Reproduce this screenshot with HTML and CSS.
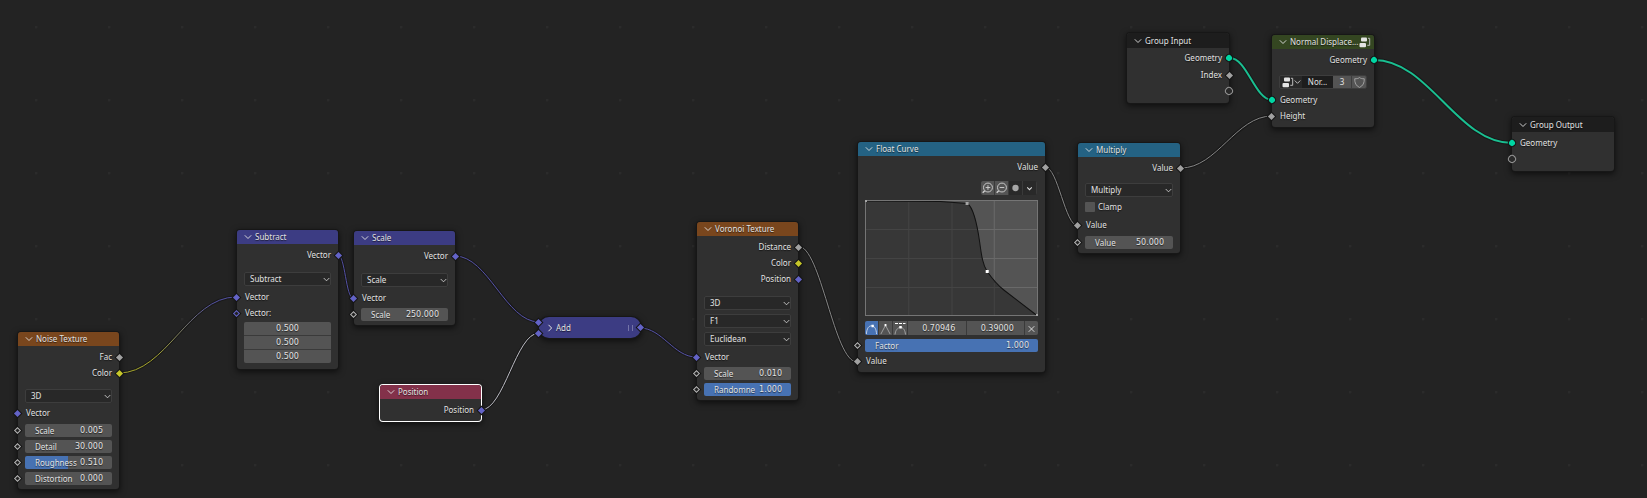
FILE: index.html
```html
<!DOCTYPE html>
<html lang="en">
<head>
<meta charset="utf-8">
<title>Geometry Nodes</title>
<link rel="stylesheet" href="styles.css">
</head>
<body>
<svg class="defs" width="0" height="0" aria-hidden="true">
  <symbol id="down" viewBox="0 0 8 8"><path d="M0.8 2.3 L4 5.5 L7.2 2.3" fill="none" stroke="currentColor" stroke-width="0.9"/></symbol>
  <symbol id="right" viewBox="0 0 8 8"><path d="M2.5 0.8 L5.6 4 L2.5 7.2" fill="none" stroke="currentColor" stroke-width="1"/></symbol>
  <symbol id="tree" viewBox="0 0 12 11"><g fill="#e4e4e4"><rect x="2" y="0.5" width="6" height="4" rx="1"/><rect x="0.5" y="6" width="6.5" height="4.2" rx="1"/></g><path d="M9 1.3 H10.7 V8.3 H8.3" fill="none" stroke="#bcbcbc"/></symbol>
</svg>
<main class="canvas">
  <svg class="links" aria-hidden="true">
    <defs>
      <linearGradient id="mix" x1="0" x2="1" y1="0" y2="0"><stop offset="0.3" stop-color="#a5a52c"/><stop offset="0.55" stop-color="#77776a"/><stop offset="0.8" stop-color="#5452a4"/></linearGradient>
    </defs>
    <path class="shade" d="M119 373C166 373 189 297 236 297M338 255C345 255 346 298 353 298M455 256C488 256 506 322 539 322M481 410C504 410 516 333 539 333M640 328C662 328 674 357 696 357M798 246C821 246 834 362 857 362M1045 167C1058 167 1065 226 1078 226M1181 168C1217 168 1236 116 1272 116"/>
    <path stroke="url(#mix)" d="M119 373C166 373 189 297 236 297"/>
    <path class="vector" d="M338 255C345 255 346 298 353 298M455 256C488 256 506 322 539 322M640 328C662 328 674 357 696 357"/>
    <path class="selected" d="M481 410C504 410 516 333 539 333"/>
    <path class="value" d="M798 246C821 246 834 362 857 362M1045 167C1058 167 1065 226 1078 226M1181 168C1217 168 1236 116 1272 116"/>
    <path class="geo-shade" d="M1230 58C1247 58 1255 100 1272 100M1374 60C1429 60 1457 143 1512 143"/>
    <path class="geo" d="M1230 58C1247 58 1255 100 1272 100M1374 60C1429 60 1457 143 1512 143"/>
  </svg>

  <section class="node texture noise">
    <header><button aria-label="Collapse"><svg><use href="#down"/></svg></button><h2>Noise Texture</h2></header>
    <div class="body">
      <div class="row out">Fac<i class="socket grey"></i></div>
      <div class="row out">Color<i class="socket yellow"></i></div>
      <div class="menu"><select aria-label="Dimensions"><option>3D</option></select><svg><use href="#down"/></svg></div>
      <div class="row in gap">Vector<i class="socket purple"></i></div>
      <div class="row"><i class="socket ring"></i><label class="field"><span>Scale</span><input value="0.005"></label></div>
      <div class="row"><i class="socket ring"></i><label class="field"><span>Detail</span><input value="30.000"></label></div>
      <div class="row"><i class="socket ring"></i><label class="field slider" style="--fill:49%"><span>Roughness</span><input value="0.510"></label></div>
      <div class="row"><i class="socket ring"></i><label class="field"><span>Distortion</span><input value="0.000"></label></div>
    </div>
  </section>

  <section class="node math subtract">
    <header><button aria-label="Collapse"><svg><use href="#down"/></svg></button><h2>Subtract</h2></header>
    <div class="body">
      <div class="row out">Vector<i class="socket purple"></i></div>
      <div class="menu"><select aria-label="Operation"><option>Subtract</option></select><svg><use href="#down"/></svg></div>
      <div class="row in">Vector<i class="socket purple"></i></div>
      <div class="row in gap">Vector:<i class="socket ring purple-ring"></i></div>
      <div class="xyz"><input aria-label="X" value="0.500"><input aria-label="Y" value="0.500"><input aria-label="Z" value="0.500"></div>
    </div>
  </section>

  <section class="node math scale">
    <header><button aria-label="Collapse"><svg><use href="#down"/></svg></button><h2>Scale</h2></header>
    <div class="body">
      <div class="row out">Vector<i class="socket purple"></i></div>
      <div class="menu"><select aria-label="Operation"><option>Scale</option></select><svg><use href="#down"/></svg></div>
      <div class="row in">Vector<i class="socket purple"></i></div>
      <div class="row"><i class="socket ring"></i><label class="field"><span>Scale</span><input value="250.000"></label></div>
    </div>
  </section>

  <section class="node input position">
    <header><button aria-label="Collapse"><svg><use href="#down"/></svg></button><h2>Position</h2></header>
    <div class="body">
      <div class="row out">Position<i class="socket purple"></i></div>
    </div>
  </section>

  <section class="node collapsed add">
    <button aria-label="Expand"><svg><use href="#right"/></svg></button><h2>Add</h2><span class="grip"></span>
    <i class="socket purple first"></i><i class="socket purple second"></i><i class="socket purple last"></i>
  </section>

  <section class="node texture voronoi">
    <header><button aria-label="Collapse"><svg><use href="#down"/></svg></button><h2>Voronoi Texture</h2></header>
    <div class="body">
      <div class="row out">Distance<i class="socket grey"></i></div>
      <div class="row out">Color<i class="socket yellow"></i></div>
      <div class="row out">Position<i class="socket purple"></i></div>
      <div class="stack">
        <div class="menu"><select aria-label="Dimensions"><option>3D</option></select><svg><use href="#down"/></svg></div>
        <div class="menu"><select aria-label="Feature"><option>F1</option></select><svg><use href="#down"/></svg></div>
        <div class="menu"><select aria-label="Distance metric"><option>Euclidean</option></select><svg><use href="#down"/></svg></div>
      </div>
      <div class="row in">Vector<i class="socket purple"></i></div>
      <div class="row"><i class="socket ring"></i><label class="field"><span>Scale</span><input value="0.010"></label></div>
      <div class="row"><i class="socket ring"></i><label class="field slider" style="--fill:100%"><span>Randomne</span><input value="1.000"></label></div>
    </div>
  </section>

  <section class="node converter curve">
    <header><button aria-label="Collapse"><svg><use href="#down"/></svg></button><h2>Float Curve</h2></header>
    <div class="body">
      <div class="row out">Value<i class="socket grey"></i></div>
      <div class="tools">
        <button class="lit" aria-label="Zoom in"><svg viewBox="0 0 14 14"><g fill="none" stroke="#d0d0d0"><circle cx="7.5" cy="6.5" r="4.8"/><path d="M4 10 L1.8 12.2" stroke-width="1.5"/><path d="M5 6.5 H10 M7.5 4 V9"/></g></svg></button>
        <button class="lit" aria-label="Zoom out"><svg viewBox="0 0 14 14"><g fill="none" stroke="#d0d0d0"><circle cx="7.5" cy="6.5" r="4.8"/><path d="M4 10 L1.8 12.2" stroke-width="1.5"/><path d="M5 6.5 H10"/></g></svg></button>
        <button aria-label="Clipping"><svg viewBox="0 0 14 14"><circle cx="7" cy="7" r="3.4" fill="#a6a6a6"/></svg></button>
        <button aria-label="Curve tools"><svg viewBox="0 0 14 14"><path d="M4.5 6.3 L7 8.8 L9.5 6.3" fill="none" stroke="#ddd" stroke-width="1.1"/></svg></button>
      </div>
      <svg class="plot" viewBox="0 0 172 116" preserveAspectRatio="none">
        <rect width="172" height="116" fill="#545454"/>
        <path d="M128.5 0 V116 M0 29.5 H172 M0 58.5 H172 M0 87.5 H172" stroke="#696969" fill="none"/>
        <path d="M0.5 1 L75 1.5 L102 3.5 C109 9 112 28 114 42 C116 57 117 64 121.5 71.5 C126 78 133 86 138 90 L171 115.5 H0Z" fill="#373737"/>
        <path d="M43.5 1 V116 M86.5 2 V116 M128.5 83 V116 M0 29.5 H112 M0 58.5 H117 M0 87.5 H135" stroke="#444" fill="none"/>
        <path d="M0.5 1 L75 1.5 L102 3.5 C109 9 112 28 114 42 C116 57 117 64 121.5 71.5 C126 78 133 86 138 90 L171 115.5" fill="none" stroke="#121212"/>
        <rect x="0.5" y="0.5" width="171" height="115" fill="none" stroke="#757575"/>
        <path d="M0 0H2V2H0ZM100 2H103V5H100ZM170 114H172V116H170Z" fill="#a5a5a5"/>
        <rect x="120" y="70" width="3" height="3" fill="#fff"/>
      </svg>
      <div class="points">
        <button class="active" aria-label="Auto handle"><svg viewBox="0 0 14 14"><path d="M1.5 12.5 C2 6 4 3.5 7.5 3.5 C10.5 4 12 7 12.5 12.5" fill="none" stroke="#ccd7e8"/><path d="M7 2.5h2.5v2.5h-2.5z" fill="#fff"/></svg></button>
        <button aria-label="Vector handle"><svg viewBox="0 0 14 14"><path d="M2 12.5 L7 3 L12 12.5" fill="none" stroke="#a5a5a5"/><path d="M6 1.5h2v2.5h-2z" fill="#fff"/></svg></button>
        <button aria-label="Clamped handle"><svg viewBox="0 0 14 14"><path d="M2 12.5 C2.5 8 4.5 6 7.5 5 C10.5 6 12 8 12.5 12.5" fill="none" stroke="#a5a5a5"/><path d="M2 1.5 H12.5" stroke="#fff" stroke-dasharray="3 1"/><path d="M6.3 4h2.5v2.5h-2.5z" fill="#fff"/></svg></button>
        <input aria-label="Point X" value="0.70946"><input aria-label="Point Y" value="0.39000">
        <button aria-label="Delete point"><svg viewBox="0 0 14 14"><path d="M4 4 L10 10 M10 4 L4 10" stroke="#e0e0e0"/></svg></button>
      </div>
      <div class="row"><i class="socket ring"></i><label class="field slider" style="--fill:100%"><span>Factor</span><input value="1.000"></label></div>
      <div class="row in">Value<i class="socket grey"></i></div>
    </div>
  </section>

  <section class="node converter multiply">
    <header><button aria-label="Collapse"><svg><use href="#down"/></svg></button><h2>Multiply</h2></header>
    <div class="body">
      <div class="row out">Value<i class="socket grey"></i></div>
      <div class="menu"><select aria-label="Operation"><option>Multiply</option></select><svg><use href="#down"/></svg></div>
      <label class="row check"><input type="checkbox">Clamp</label>
      <div class="row in gap">Value<i class="socket grey"></i></div>
      <div class="row"><i class="socket ring"></i><label class="field"><span>Value</span><input value="50.000"></label></div>
    </div>
  </section>

  <section class="node group-io group-input">
    <header><button aria-label="Collapse"><svg><use href="#down"/></svg></button><h2>Group Input</h2></header>
    <div class="body">
      <div class="row out gap">Geometry<i class="socket geometry"></i></div>
      <div class="row out">Index<i class="socket grey"></i></div>
      <div class="row out"><i class="socket empty"></i></div>
    </div>
  </section>

  <section class="node group displace">
    <header><button aria-label="Collapse"><svg><use href="#down"/></svg></button><h2>Normal Displace...</h2><svg class="tree"><use href="#tree"/></svg></header>
    <div class="body">
      <div class="row out">Geometry<i class="socket geometry"></i></div>
      <div class="datablock">
        <button class="browse" aria-label="Browse node groups"><svg class="tree"><use href="#tree"/></svg><svg><use href="#down"/></svg></button>
        <button class="name">Nor...</button>
        <button class="lit">3</button>
        <button class="lit" aria-label="Fake user"><svg class="shield" viewBox="0 0 12 12"><path d="M6 0.6 C7.5 1.8 9 2 11.2 1.9 C11.4 6.5 9.7 9.7 6 11.4 C2.3 9.7 0.6 6.5 0.8 1.9 C3 2 4.5 1.8 6 0.6Z" fill="none" stroke="#a8a8a8"/></svg></button>
      </div>
      <div class="row in">Geometry<i class="socket geometry"></i></div>
      <div class="row in">Height<i class="socket grey"></i></div>
    </div>
  </section>

  <section class="node group-io group-output">
    <header><button aria-label="Collapse"><svg><use href="#down"/></svg></button><h2>Group Output</h2></header>
    <div class="body">
      <div class="row in">Geometry<i class="socket geometry"></i></div>
      <div class="row in"><i class="socket empty"></i></div>
    </div>
  </section>
</main>
</body>
</html>
```

FILE: styles.css
```css
* { box-sizing: border-box; }
body {
  margin: 0;
  background: #232323;
  color: #e2e2e2;
  font: 8px/16px "Noto Sans", "Open Sans", sans-serif;
}
button, input, select {
  margin: 0;
  padding: 0;
  border: 0;
  border-radius: 0;
  background: none;
  color: inherit;
  font: inherit;
  appearance: none;
}
input { font-family: "DejaVu Sans", sans-serif; text-shadow: inherit; }
h2 { margin: 0; font: inherit; white-space: nowrap; }
svg { display: block; width: 8px; height: 8px; flex: none; }
.defs { position: absolute; width: 0; height: 0; }

.canvas {
  position: relative;
  min-height: 100vh;
  overflow: hidden;
  background: radial-gradient(circle at 1px 1px, #2b2b2b 1px, transparent 2px) 35px 26px / 73px 73px;
}
.links { position: absolute; inset: 0; width: 100%; height: 100%; fill: none; }
.links .shade { stroke: #191919; stroke-width: 3; }
.links .vector { stroke: #5653a8; }
.links .value { stroke: #858585; }
.links .selected { stroke: #bcbcc4; }
.links .geo { stroke: #1abf91; stroke-width: 2; }
.links .geo-shade { stroke: #191919; stroke-width: 4; }

.node {
  position: absolute;
  width: 102px;
  border-radius: 3px;
  background: #303030;
  box-shadow: 0 0 0 1px #171717, 0 2px 6px 1px #0009;
  text-shadow: 0 1px 1px #0009;
}
.texture, .math, .input { width: 101px; }
.node header {
  display: flex;
  align-items: center;
  height: 14px;
  padding-left: 7px;
  border-radius: 3px 3px 0 0;
}
header button { width: 11px; }
.body { display: flex; flex-direction: column; padding: 3px 7px 2px; }

.texture header { background: #79461d; }
.math header { background: #3c3c83; }
.converter header { background: #246283; }
.input header { background: #83314a; }
.group header { background: #344621; }
.group-io header { height: 15px; background: #1d1d1d; }
.group-io .body { padding: 2px 7px 4px; }

.row { position: relative; height: 16px; display: flex; align-items: center; }
.out { justify-content: flex-end; }
.in { padding-left: 1px; }
.gap { margin-bottom: 1px; }

.socket {
  position: absolute;
  left: -10px;
  width: 5px;
  height: 5px;
  background: #a1a1a1;
  box-shadow: 0 0 0 1px #151515;
  transform: rotate(45deg);
}
.out .socket { left: auto; right: -10px; }
.yellow { background: #c7c729; }
.purple { background: #6363c7; }
.ring { background: #222; border: 1px solid #b4b4b4; }
.purple-ring { border-color: #6363c7; }
.geometry, .empty { width: 6px; height: 6px; border-radius: 50%; background: #00d6a3; }
.empty { background: #2a2a2a; box-shadow: 0 0 0 1px #969696; }

.menu { position: relative; display: flex; margin: 8px 0 2px; }
.math .menu { margin: 9px 0 3px; }
.multiply .menu { margin-top: 7px; }
.menu select {
  width: 100%;
  height: 14px;
  padding-left: 5px;
  border: 1px solid #3d3d3d;
  border-radius: 2px;
  background: #282828;
  line-height: 12px;
}
.menu svg { position: absolute; right: 1px; top: 4px; width: 7px; height: 7px; pointer-events: none; }
.stack { display: grid; gap: 4px; margin: 9px 0 3px; }
.stack .menu { margin: 0; }

.field {
  display: flex;
  align-items: center;
  width: 100%;
  height: 13px;
  padding: 0 9px 0 10px;
  border-radius: 2px;
  background: #545454;
  line-height: 13px;
}
.field input { flex: 1; width: 0; min-width: 0; text-align: right; }
.slider { background: linear-gradient(90deg, #4772b3 var(--fill), #545454 var(--fill)); }

.xyz { display: grid; gap: 1px; border-radius: 2px; overflow: hidden; background: #3a3a3a; }
.xyz input { width: 100%; height: 13px; background: #545454; text-align: center; }

.check { gap: 3px; margin-bottom: 2px; }
.check input { width: 10px; height: 10px; border-radius: 1px; background: #545454; }

.tools { display: grid; grid-template-columns: repeat(4, 14px); align-self: flex-end; height: 14px; margin: 6px 1px 0 0; border-radius: 2px; background: #292929; overflow: hidden; }
.tools button { border-right: 1px solid #3a3a3a; }
.tools svg, .points svg { width: 100%; height: 14px; }
.lit { background: #545454; }
.plot { width: 100%; height: 116px; margin: 5px 0; }
.points { display: grid; grid-template-columns: 13px 13px 14px 1fr 1fr 13px; gap: 1px; height: 14px; margin-bottom: 2px; border-radius: 2px; background: #3a3a3a; overflow: hidden; }
.points button, .points input { min-width: 0; width: 100%; background: #545454; }
.points input { padding-left: 4px; text-align: center; }
.points .active { background: #4772b3; }

.tree { width: 12px; height: 11px; }
header .tree { margin-left: auto; margin-right: 3px; }
.datablock { display: grid; grid-template-columns: 22px 1fr 18px 15px; height: 14px; margin: 7px 0 3px; border: 1px solid #3d3d3d; border-radius: 2px; background: #282828; line-height: 12px; overflow: hidden; }
.datablock button { display: flex; align-items: center; justify-content: center; }
.datablock .name { background: #1d1d1d; }
.datablock .lit + .lit { border-left: 1px solid #3d3d3d; }
.browse svg:last-child { width: 7px; }
.shield { width: 11px; height: 11px; }

.noise { left: 18px; top: 332px; }
.noise .body { padding-bottom: 3px; }
.subtract { left: 237px; top: 230px; }
.subtract .body { padding-bottom: 6px; }
.scale { left: 354px; top: 231px; }
.scale .body { padding-bottom: 3px; }
.position { left: 380px; top: 385px; box-shadow: 0 0 0 1px #fff, 0 2px 6px 1px #0009; }
.position .body { padding-bottom: 3px; }
.voronoi { left: 697px; top: 222px; }
.voronoi .body { padding-bottom: 3px; }
.curve { left: 858px; top: 142px; width: 187px; }
.curve .body { padding-bottom: 3px; }
.multiply { left: 1078px; top: 143px; }
.multiply .body { padding-bottom: 3px; }
.multiply .menu { margin-bottom: 2px; }
.group-input { left: 1127px; top: 33px; }
.displace { left: 1272px; top: 35px; }
.displace .body { padding-bottom: 3px; }
.group-output { left: 1512px; top: 117px; }
.group-output .body { padding-top: 3px; }

.collapsed {
  left: 539px;
  top: 317px;
  display: flex;
  align-items: center;
  gap: 2px;
  height: 21px;
  padding: 0 7px;
  border-radius: 10px;
  background: #3c3c83;
}
.grip { width: 5px; height: 6px; margin-left: auto; margin-right: 1px; border: solid #7474a8; border-width: 0 1px; }
.collapsed .socket { left: -3px; }
.collapsed .first { top: 3px; }
.collapsed .second { top: 14px; }
.collapsed .last { left: auto; right: -2px; top: 8px; }
```
